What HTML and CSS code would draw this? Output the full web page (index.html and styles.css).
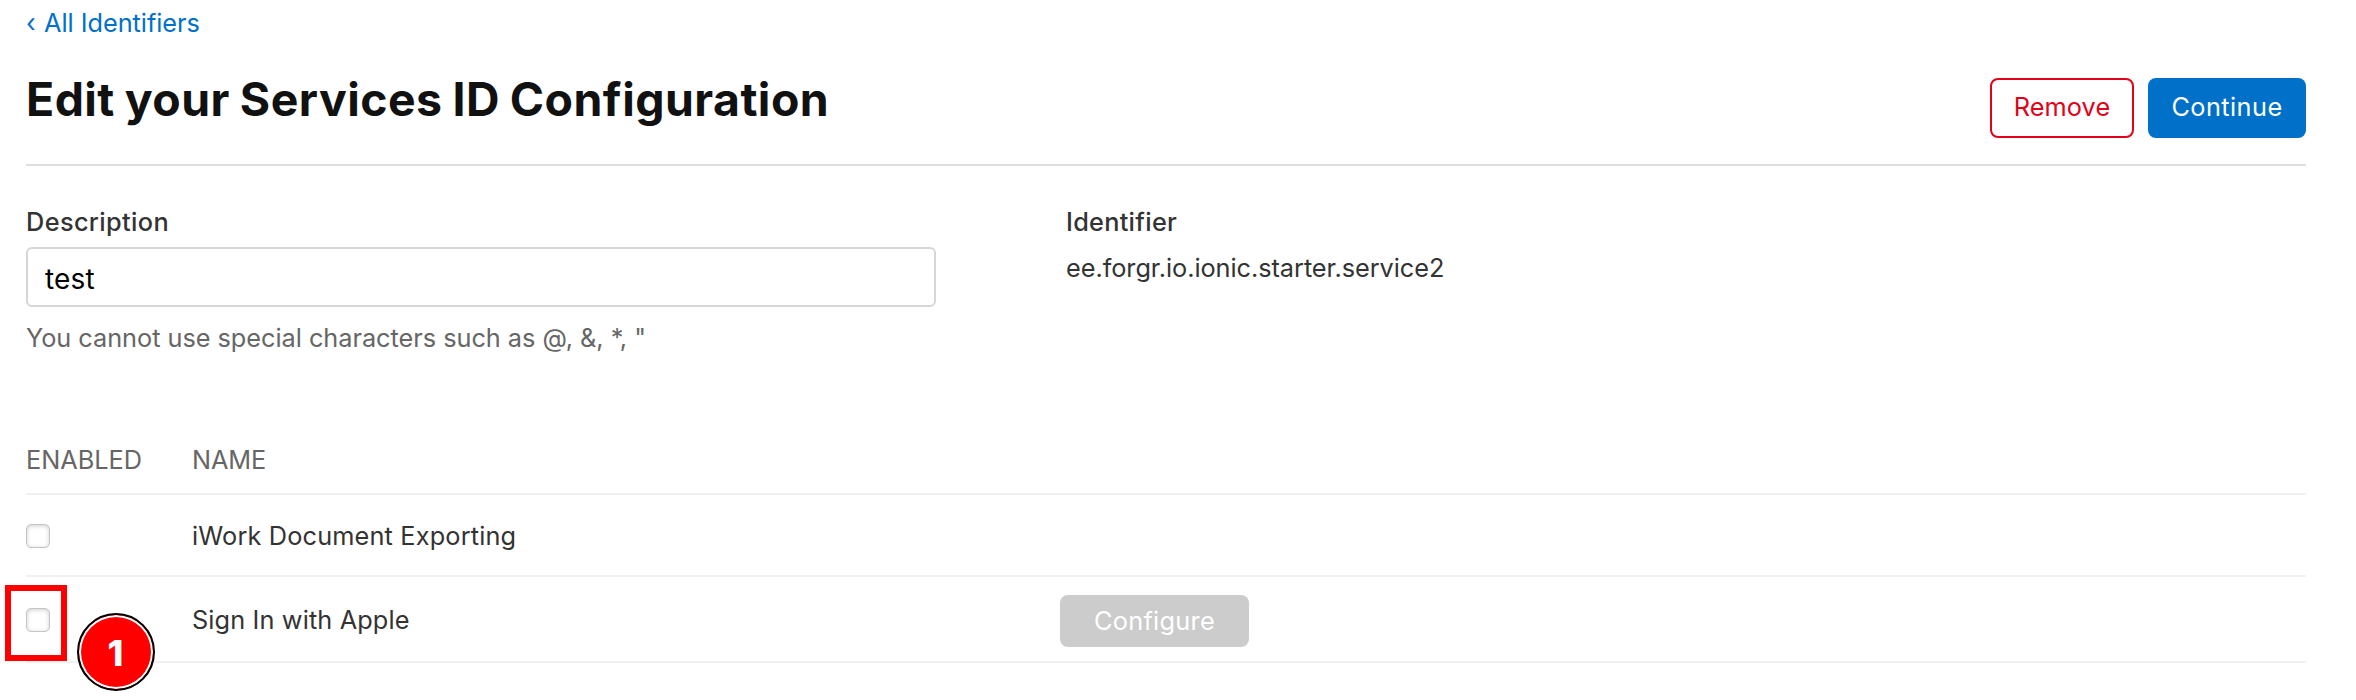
FILE: index.html
```
<!DOCTYPE html>
<html lang="en">
<head>
<meta charset="utf-8">
<title>Edit your Services ID Configuration</title>
<link rel="stylesheet" href="styles.css">
</head>
<body>
<main class="page">
  <a class="back" href="#"><span class="back-chevron">‹</span><span class="back-text">All Identifiers</span></a>
  <header class="header">
    <h1 class="title">Edit your Services ID Configuration</h1>
    <div class="actions">
      <button class="btn btn-remove">Remove</button>
      <button class="btn btn-continue">Continue</button>
    </div>
  </header>
  <section class="fields">
    <div class="field">
      <label class="label" for="description">Description</label>
      <input class="input" id="description" type="text" value="test">
      <p class="hint">You cannot use special characters such as @, &amp;, *, "</p>
    </div>
    <div class="field">
      <div class="label label-identifier">Identifier</div>
      <p class="value">ee.forgr.io.ionic.starter.service2</p>
    </div>
  </section>
  <section class="table">
    <div class="row row-head"><span class="enabled">ENABLED</span><span class="name-head">NAME</span></div>
    <div class="row row-iwork">
      <div><input class="check" type="checkbox" aria-label="iWork Document Exporting"></div>
      <span class="name-iwork">iWork Document Exporting</span>
    </div>
    <div class="row row-signin">
      <div class="marked">
        <input class="check" type="checkbox" aria-label="Sign In with Apple">
        <div class="highlight"></div>
        <div class="badge">1</div>
      </div>
      <span class="name-signin">Sign In with Apple</span>
      <button class="btn-configure" disabled>Configure</button>
    </div>
  </section>
</main>
</body>
</html>
```
FILE: styles.css
```
* { box-sizing: border-box; }

body {
  margin: 0;
  background: #fff;
  color: #333;
  font-family: Inter, "Liberation Sans", sans-serif;
  font-size: 25.3px;
  line-height: 32px;
}

button, input { font: inherit; margin: 0; }

.page {
  height: 700px;
  padding: 7px 50px 0 26px;
  overflow: hidden;
}

.back {
  display: flex;
  color: #0070c9;
  text-decoration: none;
}
.back-chevron { width: 18px; }
.back-text { letter-spacing: -0.03px; }

.header {
  display: flex;
  justify-content: space-between;
  height: 127px;
  padding-top: 32px;
  border-bottom: 2px solid #ddd;
}
.title {
  margin: 0;
  color: #111;
  font-size: 46.4px;
  line-height: 56px;
  font-weight: 700;
  letter-spacing: 0.46px;
  word-spacing: -1.5px;
}
.actions {
  display: flex;
  gap: 14px;
  margin-top: 7px;
}
.btn {
  height: 60px;
  padding: 0 0 2px;
  border-radius: 8px;
}
.btn-remove {
  width: 144px;
  border: 2px solid #e30019;
  background: #fff;
  color: #e30019;
  letter-spacing: 0.1px;
}
.btn-continue {
  width: 158px;
  border: 0;
  background: #0070c9;
  color: #fff;
  letter-spacing: 0.44px;
}

.fields {
  display: grid;
  grid-template-columns: 910px 1fr;
  column-gap: 130px;
  height: 278px;
  padding-top: 40px;
}
.label {
  display: block;
  font-weight: 500;
  letter-spacing: 0.38px;
}
.label-identifier { letter-spacing: 0.28px; }
.input {
  display: block;
  width: 100%;
  height: 60px;
  margin-top: 9px;
  padding: 3px 17px 0;
  border: 2px solid #d6d6d6;
  border-radius: 6px;
  background: #fff;
  color: #000;
  font-size: 28px;
  letter-spacing: 0.15px;
}
.hint {
  margin: 15px 0 0;
  color: #666;
  letter-spacing: -0.03px;
}
.value {
  margin: 14px 0 0;
  letter-spacing: -0.05px;
}

.row {
  display: grid;
  grid-template-columns: 166px 868px 189px;
  align-items: center;
  border-bottom: 2px solid #f0f0f0;
}
.row-head {
  height: 51px;
  padding-bottom: 17px;
  color: #666;
}
.enabled { letter-spacing: 0; }
.name-head { letter-spacing: -0.15px; }
.row-iwork { height: 82px; padding-top: 2px; }
.row-signin { height: 86px; padding-top: 2px; }
.name-iwork { letter-spacing: 0.16px; }
.name-signin { letter-spacing: 0.13px; }

.check {
  display: block;
  appearance: none;
  width: 24px;
  height: 24px;
  border: 1px solid #c4c4c4;
  border-radius: 5px;
  background: #fff;
  box-shadow: inset 0 1px 4px rgba(0, 0, 0, 0.2);
}

.btn-configure {
  height: 52px;
  margin-top: 2px;
  padding: 0 0 1px;
  border: 0;
  border-radius: 8px;
  background: #ccc;
  color: #fff;
  letter-spacing: 0.29px;
}

/* Step annotation drawn over the checkbox */
.marked { position: relative; }
.highlight {
  position: absolute;
  left: -21px;
  top: -23px;
  width: 62px;
  height: 76px;
  border: 6px solid #f00;
}
.badge {
  position: absolute;
  left: 51px;
  top: 5px;
  width: 78px;
  height: 78px;
  padding-right: 1px;
  border: 2px solid #000;
  border-radius: 50%;
  background: #f00;
  box-shadow: inset 0 0 0 2px #fff, 0 0 0 1px #fff;
  color: #fff;
  font-size: 36px;
  font-weight: 800;
  line-height: 76px;
  text-align: center;
}
```
